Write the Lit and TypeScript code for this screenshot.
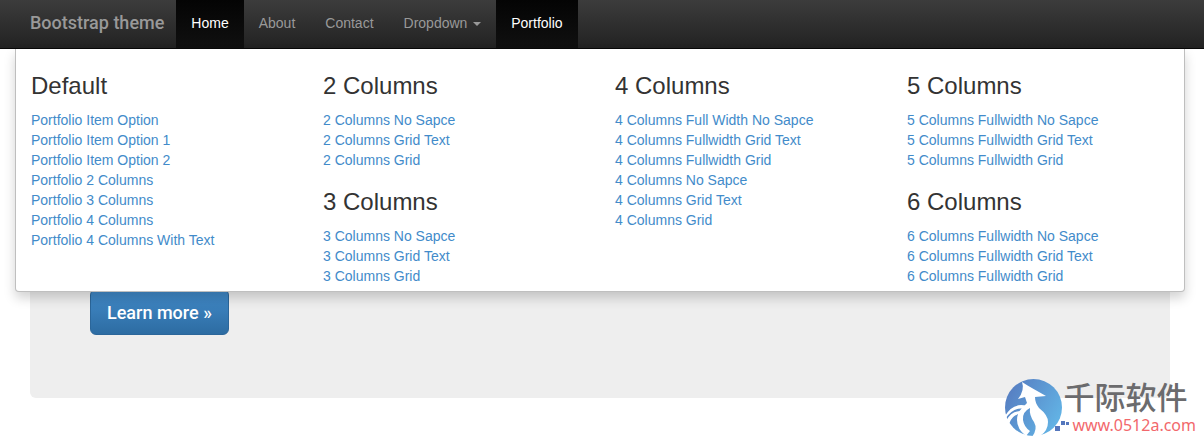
import { LitElement, html, css } from "lit";
import { customElement } from "lit/decorators.js";

interface Group {
  title: string;
  links: string[];
}

const columns: Group[][] = [
  [
    {
      title: "Default",
      links: [
        "Portfolio Item Option",
        "Portfolio Item Option 1",
        "Portfolio Item Option 2",
        "Portfolio 2 Columns",
        "Portfolio 3 Columns",
        "Portfolio 4 Columns",
        "Portfolio 4 Columns With Text",
      ],
    },
  ],
  [
    { title: "2 Columns", links: ["2 Columns No Sapce", "2 Columns Grid Text", "2 Columns Grid"] },
    { title: "3 Columns", links: ["3 Columns No Sapce", "3 Columns Grid Text", "3 Columns Grid"] },
  ],
  [
    {
      title: "4 Columns",
      links: [
        "4 Columns Full Width No Sapce",
        "4 Columns Fullwidth Grid Text",
        "4 Columns Fullwidth Grid",
        "4 Columns No Sapce",
        "4 Columns Grid Text",
        "4 Columns Grid",
      ],
    },
  ],
  [
    {
      title: "5 Columns",
      links: ["5 Columns Fullwidth No Sapce", "5 Columns Fullwidth Grid Text", "5 Columns Fullwidth Grid"],
    },
    {
      title: "6 Columns",
      links: ["6 Columns Fullwidth No Sapce", "6 Columns Fullwidth Grid Text", "6 Columns Fullwidth Grid"],
    },
  ],
];

@customElement("mega-menu")
class MegaMenu extends LitElement {
  static styles = css`
    :host {
      display: block;
      box-sizing: border-box;
      padding: 5px 0;
      background: #fff;
      border: 1px solid rgba(0, 0, 0, 0.25);
      border-top: 0;
      border-radius: 0 0 4px 4px;
      box-shadow: 0 6px 12px rgba(0, 0, 0, 0.18);
    }
    .columns {
      display: grid;
      grid-template-columns: repeat(4, 1fr);
    }
    .column {
      padding: 0 15px;
    }
    .title {
      margin: 19px 0 11px;
      font-size: 24px;
      font-weight: 400;
      line-height: 26px;
      color: #333;
    }
    .links {
      margin: 0;
      padding: 0;
      list-style: none;
    }
    .link {
      color: #428bca;
      text-decoration: none;
    }
  `;

  render() {
    return html`<div class="columns">
      ${columns.map(
        (groups) => html`<div class="column">
          ${groups.map(
            (group) => html`<h3 class="title">${group.title}</h3>
              <ul class="links">
                ${group.links.map((text) => html`<li><a class="link" href="#">${text}</a></li>`)}
              </ul>`
          )}
        </div>`
      )}
    </div>`;
  }
}

@customElement("site-mark")
class SiteMark extends LitElement {
  static styles = css`
    :host {
      display: flex;
      align-items: center;
    }
    .logo {
      width: 68px;
      height: 58px;
      margin-right: -10px;
    }
    .words {
      display: grid;
      gap: 2px;
      padding-bottom: 2px;
    }
    .name {
      font: 500 31px/34px "Noto Sans CJK SC", sans-serif;
      color: #6b6b6d;
    }
    .url {
      padding-left: 9px;
      font: 16px/20px "Noto Sans", sans-serif;
      color: #f2686c;
    }
  `;

  render() {
    return html`
      <svg class="logo" viewBox="0 0 68 58" aria-hidden="true">
        <defs>
          <linearGradient id="disc" x1="0" y1="0" x2="1" y2="0.600">
            <stop offset="0" stop-color="#5577bd" />
            <stop offset="1" stop-color="#62b2e4" />
          </linearGradient>
        </defs>
        <circle cx="28.500" cy="28.500" r="28.500" fill="url(#disc)" />
        <path fill="#fff" d="M17 3C24 8 33 12 41 17L30 18Q30 24 34 29Q43 36 43 43Q43 52 35 57L27 58Q33 50 29 43Q24 36 25 29Q17 33 18 41Q19 48 25 52L21 57Q12 50 12 41Q12 34 17 29L22 24L20 18L13 20Q20 11 17 3Z" />
        <path fill="#fff" d="M0 37Q8 23 22 27L20 30Q9 27 0 40Z" />
        <path fill="#fff" d="M1 42Q6 32 16 32L14 35Q7 36 4 45Z" />
        <path fill="#5577bd" d="M50 47h5v5h-5zM56 42h4v4h-4zM61 43h3v3h-3z" />
      </svg>
      <div class="words">
        <div class="name">千际软件</div>
        <div class="url">www.0512a.com</div>
      </div>
    `;
  }
}

@customElement("app-root")
class AppRoot extends LitElement {
  static styles = css`
    :host {
      display: block;
      position: relative;
      font: 14px/20px "Liberation Sans", Arial, sans-serif;
      color: #333;
      background: #fff;
    }
    .navbar {
      position: relative;
      z-index: 2;
      padding: 0 19px 0 15px;
      background: linear-gradient(#3c3c3c, #222);
      border-bottom: 1px solid #080808;
    }
    .nav {
      display: flex;
    }
    .brand,
    .item {
      padding: 13px 15px 15px;
      line-height: 20px;
      color: #999;
      text-decoration: none;
      white-space: nowrap;
    }
    .brand {
      padding-right: 12px;
      font-family: Roboto, sans-serif;
      font-size: 18px;
      font-weight: 500;
    }
    .active {
      color: #fff;
      background: linear-gradient(#040404, #101010);
    }
    .caret {
      display: inline-block;
      margin-left: 2px;
      vertical-align: middle;
      border: 4px solid transparent;
      border-top-color: currentColor;
      border-bottom: 0;
    }
    .menu {
      position: absolute;
      top: 100%;
      left: 15px;
      right: 19px;
      margin-top: 1px;
    }
    .page {
      padding: 21px 34px 46px 30px;
    }
    .jumbotron {
      padding: 219px 60px 63px;
      background: #eee;
      border-radius: 6px;
    }
    .button {
      display: block;
      width: fit-content;
      padding: 11px 16px 9px;
      font-family: Roboto, sans-serif;
      font-size: 18px;
      font-weight: 500;
      line-height: 24px;
      color: #fff;
      text-decoration: none;
      background: linear-gradient(#428bca, #2d6ca2);
      border: 1px solid #2b669a;
      border-radius: 6px;
    }
    .mark {
      position: absolute;
      right: 8px;
      bottom: 7px;
    }
  `;

  render() {
    return html`
      <header class="navbar">
        <nav class="nav">
          <a class="brand" href="#">Bootstrap theme</a>
          <a class="item active" href="#">Home</a>
          <a class="item" href="#">About</a>
          <a class="item" href="#">Contact</a>
          <a class="item" href="#">Dropdown <span class="caret"></span></a>
          <a class="item active" href="#">Portfolio</a>
        </nav>
        <mega-menu class="menu"></mega-menu>
      </header>
      <main class="page">
        <section class="jumbotron">
          <a class="button" href="#">Learn more »</a>
        </section>
      </main>
      <site-mark class="mark"></site-mark>
    `;
  }
}
